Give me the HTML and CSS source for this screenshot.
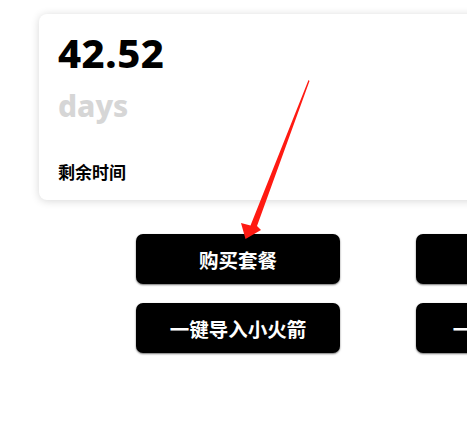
FILE: index.html
```html
<!DOCTYPE html>
<html lang="zh-CN">
<head>
<meta charset="utf-8">
<title>剩余时间</title>
<link rel="stylesheet" href="styles.css">
</head>
<body>
<div class="page">
  <section class="card">
    <div class="value">42.52</div>
    <div class="unit">days</div>
    <div class="label">剩余时间</div>
  </section>
  <div class="actions">
    <button class="btn">购买套餐</button>
    <button class="btn">续费套餐</button>
    <button class="btn">一键导入小火箭</button>
    <button class="btn">一键导入Clash</button>
  </div>
  <svg class="arrow" width="467" height="423" viewBox="0 0 467 423" aria-hidden="true">
    <polygon fill="#ff1a12" points="308.5,80 309.5,81 257,226 261,230 245.5,239 241,223 250.5,225.5"/>
  </svg>
</div>
</body>
</html>
```

FILE: styles.css
```css
html, body {
  margin: 0;
  padding: 0;
  background: #ffffff;
  overflow: hidden;
}

body {
  width: 467px;
  height: 423px;
  font-family: "Noto Sans", "Noto Sans CJK SC", sans-serif;
  color: #000;
}

.page {
  position: relative;
  width: 467px;
  height: 423px;
  padding: 14px 0 0 39px;
  box-sizing: border-box;
}

.card {
  width: 560px;
  box-sizing: border-box;
  padding: 19px 20px 20px 19px;
  background: #fff;
  border-radius: 8px;
  box-shadow: 0 1px 8px rgba(0, 0, 0, 0.16);
}

.value {
  font-size: 40px;
  line-height: 40px;
  font-weight: 800;
  letter-spacing: 0.5px;
}

.unit {
  margin-top: 18px;
  font-size: 30px;
  line-height: 30px;
  font-weight: 800;
  color: #d6d6d6;
}

.label {
  margin-top: 42px;
  font-family: "Noto Sans CJK SC", sans-serif;
  font-size: 17px;
  line-height: 17px;
  font-weight: 700;
}

.actions {
  display: grid;
  grid-template-columns: 204px 204px;
  grid-auto-rows: 50px;
  column-gap: 76px;
  row-gap: 19px;
  margin: 34px 0 0 97px;
}

.btn {
  border: 0;
  margin: 0;
  padding: 0;
  background: #000;
  color: #fff;
  border-radius: 7px;
  box-shadow: 0 1px 2px rgba(0, 0, 0, 0.55);
  font-family: "Noto Sans CJK SC", sans-serif;
  font-size: 19.5px;
  font-weight: 700;
  white-space: nowrap;
}

.arrow {
  position: absolute;
  left: 0;
  top: 0;
  pointer-events: none;
}
```
